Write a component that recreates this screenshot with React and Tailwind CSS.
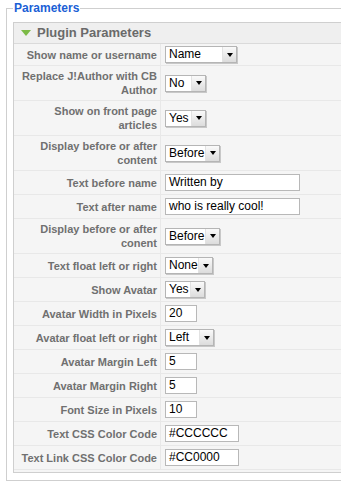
const rows = [
    { label: 'Show name or username', kind: 'select', value: 'Name', w: 'w-[72px]' },
    { label: 'Replace J!Author with CB Author', kind: 'select', value: 'No', w: 'w-[41px]', tall: true },
    { label: 'Show on front page articles', kind: 'select', value: 'Yes', w: 'w-[41px]', tall: true },
    { label: 'Display before or after content', kind: 'select', value: 'Before', w: 'w-[55px]', tall: true },
    { label: 'Text before name', kind: 'input', value: 'Written by', w: 'w-[135px]' },
    { label: 'Text after name', kind: 'input', value: 'who is really cool!', w: 'w-[135px]' },
    { label: 'Display before or after conent', kind: 'select', value: 'Before', w: 'w-[55px]', tall: true },
    { label: 'Text float left or right', kind: 'select', value: 'None', w: 'w-[48px]' },
    { label: 'Show Avatar', kind: 'select', value: 'Yes', w: 'w-[40px]' },
    { label: 'Avatar Width in Pixels', kind: 'input', value: '20', w: 'w-[32px]' },
    { label: 'Avatar float left or right', kind: 'select', value: 'Left', w: 'w-[49px]' },
    { label: 'Avatar Margin Left', kind: 'input', value: '5', w: 'w-[32px]' },
    { label: 'Avatar Margin Right', kind: 'input', value: '5', w: 'w-[32px]' },
    { label: 'Font Size in Pixels', kind: 'input', value: '10', w: 'w-[32px]' },
    { label: 'Text CSS Color Code', kind: 'input', value: '#CCCCCC', w: 'w-[74px]' },
    { label: 'Text Link CSS Color Code', kind: 'input', value: '#CC0000', w: 'w-[74px]' },
]

// fake mac-style select box
const FakeSelect = ({ value, w }) => (
    <div className={`${w} h-[17px] flex border border-[#b5b5b5] bg-white shadow-[1px_1px_0_#c8c8c8]`}>
        <span className="flex-1 pl-[3px] text-[12px] leading-[15px] text-black">{value}</span>
        <span className="w-[14px] flex items-center justify-center bg-gradient-to-b from-[#fafafa] to-[#dcdcdc] border-l border-[#e2e2e2]">
            <span className="block w-0 h-0 border-l-[3px] border-r-[3px] border-t-[4px] border-l-transparent border-r-transparent border-t-black" />
        </span>
    </div>
)

const FakeInput = ({ value, w }) => (
    <div className={`${w} h-[17px] border border-[#b8b8b8] bg-white pl-[3px] text-[12px] leading-[15px] text-black`}>
        {value}
    </div>
)

const App = () => {
    return (
        <div className="w-[341px] h-[491px] bg-white overflow-hidden font-['Liberation_Sans',Arial,sans-serif]">
            <fieldset className="ml-[6px] w-[360px] h-[481px] border border-[#cfcfcf] px-[6px]">
                <legend className="px-[1px] text-[12px] leading-[16px] font-bold text-[#1b5fd6]">Parameters</legend>

                {/* plugin panel */}
                <div className="mt-[6px] border border-[#cfcfcf] bg-[#f5f5f5]">
                    <div className="h-[21px] flex items-center gap-[6px] pl-[7px] bg-[#efefef] border-b border-[#dadada]">
                        <span className="block w-0 h-0 border-l-[5px] border-r-[5px] border-t-[6px] border-l-transparent border-r-transparent border-t-[#7cba46]" />
                        <span className="text-[13px] font-bold text-[#6a6a6a]">Plugin Parameters</span>
                    </div>

                    {rows.map((row, i) => (
                        <div key={i} className={`flex border-b border-[#e8e8e8] ${row.tall ? 'h-[35px]' : i === 0 ? 'h-[22px]' : 'h-[24px]'}`}>
                            <div className="w-[147px] shrink-0 flex items-center justify-end pr-[3px] pl-[4px] border-r border-[#e8e8e8] text-right text-[11px] leading-[14px] font-bold text-[#707070]">
                                {row.label}
                            </div>
                            <div className="flex-1 flex items-center pl-[4px]">
                                {row.kind === 'select'
                                    ? <FakeSelect value={row.value} w={row.w} />
                                    : <FakeInput value={row.value} w={row.w} />}
                            </div>
                        </div>
                    ))}
                    <div className="h-[2px]" />
                </div>
            </fieldset>
        </div>
    )
}

export default App
